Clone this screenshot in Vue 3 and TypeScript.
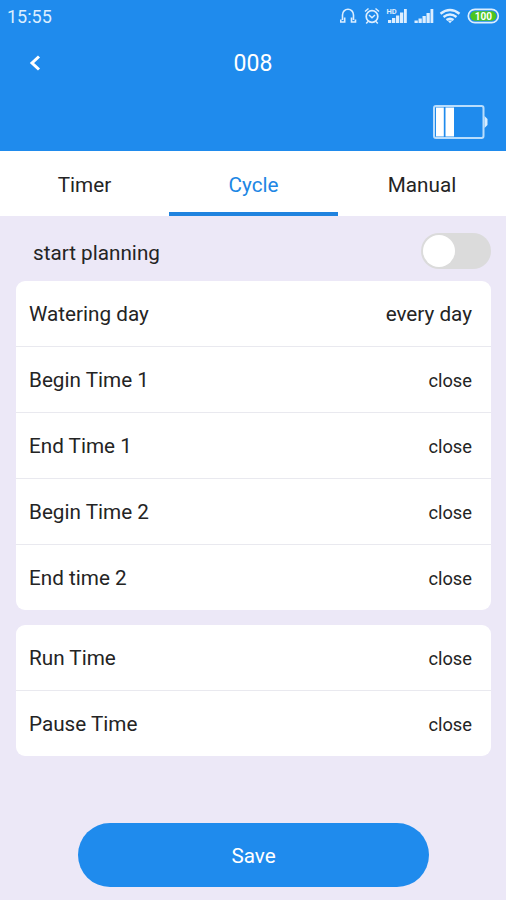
<script setup lang="ts">
import { ref } from 'vue'

interface Setting {
  label: string
  value: string
  large?: boolean
}

const tabs: string[] = ['Timer', 'Cycle', 'Manual']
const activeTab = ref('Cycle')
const planning = ref(false)

const groups: Setting[][] = [
  [
    { label: 'Watering day', value: 'every day', large: true },
    { label: 'Begin Time 1', value: 'close' },
    { label: 'End Time 1', value: 'close' },
    { label: 'Begin Time 2', value: 'close' },
    { label: 'End time 2', value: 'close' },
  ],
  [
    { label: 'Run Time', value: 'close' },
    { label: 'Pause Time', value: 'close' },
  ],
]
</script>

<template>
  <div class="screen">
    <header class="header">
      <div class="status">
        <span class="clock">15:55</span>
        <svg class="status-icons" width="166" height="24" viewBox="0 0 166 24" fill="none" stroke="#dceeff">
          <path d="M2.500 16V11a5.500 5.800 0 0 1 11 0v5M4.700 13.500v4.500H0.700v-2.500M11.500 13.500v4.500h4v-2.500" stroke-width="1.600" />
          <circle cx="32" cy="12.500" r="5.800" stroke-width="1.700" />
          <path d="M29 11l3 2.700 3-2.700M25 7.500l3.500-3M39 7.500l-3.500-3M28 17.500l-1.800 2M36 17.500l1.800 2" stroke-width="1.500" />
          <g fill="#dceeff" stroke="none">
            <path d="M48 16h3.300v3H48zM52 14h3.300v5H52zM56 11.500h3.300V19H56zM60 8.500h3.300V19H60zM64 5h2.800v14H64z" />
            <path d="M74.500 16.500h3.300V19h-3.300zM78.500 14.500h3.300V19h-3.300zM82.500 12h3.300v7h-3.300zM86.500 9h3.300v10h-3.300zM90.500 5h2.800v14h-2.800z" />
            <text x="46.500" y="10" class="hd">HD</text>
          </g>
          <path d="M100.500 9.700q9.500-7.500 19 0M103.500 13q6.500-5 13 0M106.500 16q3.500-2.700 7 0" stroke-width="2.400" />
          <path d="M107.500 16.500h5L110 19.300z" fill="#dceeff" stroke="none" />
          <rect x="128.300" y="5.300" width="30" height="13.400" rx="6.700" stroke-width="1.700" />
          <rect x="130.300" y="7.300" width="26" height="9.400" rx="4.700" fill="#4cc51f" stroke="none" />
          <text x="143.300" y="15.900" text-anchor="middle" class="charge">100</text>
        </svg>
      </div>
      <div class="title-bar">
        <svg class="back" width="16" height="20" viewBox="0 0 16 20">
          <path d="M12 3.500L5 10l7 6.500" fill="none" stroke="#fff" stroke-width="3" />
        </svg>
        <h1>008</h1>
      </div>
      <div class="battery-row">
        <svg width="56" height="36" viewBox="0 0 56 36">
          <rect x="2" y="2" width="49.500" height="32" rx="2" fill="none" stroke="#b9ddfc" stroke-width="2" />
          <path d="M4 3.500h7.800v29H4zM13.500 3.500h8.500v29h-8.500z" fill="#fff" />
          <path d="M52.500 12l3 3v6l-3 3z" fill="#d8edff" />
        </svg>
      </div>
    </header>

    <nav class="tabs">
      <button v-for="tab in tabs" :key="tab" :class="['tab', { active: tab === activeTab }]" @click="activeTab = tab">
        {{ tab }}
      </button>
    </nav>

    <main class="content">
      <div class="planning">
        <span class="planning-label">start planning</span>
        <button :class="['switch', { on: planning }]" role="switch" :aria-checked="planning" @click="planning = !planning">
          <span class="knob"></span>
        </button>
      </div>
      <section v-for="(group, i) in groups" :key="i" class="card">
        <div v-for="item in group" :key="item.label" class="row">
          <span>{{ item.label }}</span>
          <span :class="['value', { large: item.large }]">{{ item.value }}</span>
        </div>
      </section>
      <button class="save">Save</button>
    </main>
  </div>
</template>

<style>
body {
  margin: 0;
  background: #ece8f7;
}
</style>

<style scoped>
.screen {
  height: 900px;
  overflow: hidden;
  display: flex;
  flex-direction: column;
  background: #ece8f7;
  color: #242424;
  font-family: Roboto, 'Liberation Sans', sans-serif;
  font-size: 20.7px;
}
button {
  border: 0;
  padding: 0;
  background: none;
  font: inherit;
  color: inherit;
}
.header {
  height: 151px;
  background: #1f8bed;
  color: #fff;
}
.status {
  height: 33px;
  box-sizing: border-box;
  padding: 4px 0 0 7px;
  display: flex;
  justify-content: space-between;
}
.clock {
  font-size: 18px;
  line-height: 26px;
  color: #dceeff;
}
.hd {
  font: bold 7.5px Roboto, sans-serif;
}
.charge {
  font: bold 10px Roboto, sans-serif;
  fill: #fff;
  stroke: none;
}
.title-bar {
  height: 60px;
  display: grid;
  grid-template-columns: 60px 1fr 60px;
  align-items: center;
}
.back {
  margin-left: 27px;
}
h1 {
  margin: 0;
  text-align: center;
  font-size: 23px;
  font-weight: 400;
}
.battery-row {
  display: flex;
  justify-content: flex-end;
  padding: 11px 18px 0 0;
}
.tabs {
  height: 65px;
  display: grid;
  grid-template-columns: 169px 169px 168px;
  background: #fff;
}
.tab {
  border-bottom: 4px solid transparent;
  padding-top: 7px;
}
.tab.active {
  color: #2086e4;
  border-bottom-color: #2083df;
}
.content {
  flex: 1;
  display: flex;
  flex-direction: column;
  padding: 0 15px 0 16px;
}
.planning {
  height: 65px;
  display: flex;
  align-items: center;
  justify-content: space-between;
  padding: 5px 0 0 17px;
  box-sizing: border-box;
}
.planning-label {
  padding-top: 3px;
}
.switch {
  width: 70px;
  height: 36px;
  box-sizing: border-box;
  border-radius: 18px;
  background: #dbdbdb;
  padding: 2px;
  display: flex;
}
.switch.on {
  background: #1f8bed;
  justify-content: flex-end;
}
.knob {
  width: 32px;
  height: 32px;
  border-radius: 50%;
  background: #fff;
}
.card {
  background: #fff;
  border-radius: 9px;
  margin-bottom: 15px;
}
.row {
  height: 66px;
  box-sizing: border-box;
  padding: 1px 19px 0 13px;
  display: flex;
  align-items: center;
  justify-content: space-between;
}
.row:first-child {
  height: 65px;
}
.row + .row {
  border-top: 1px solid #e9e9ef;
}
.value {
  font-size: 18.3px;
}
.value.large {
  font-size: 20.7px;
}
.save {
  align-self: center;
  width: 351px;
  height: 64px;
  margin-top: 52px;
  padding-top: 2px;
  border-radius: 32px;
  background: #1f8bed;
  color: #fff;
}
</style>
